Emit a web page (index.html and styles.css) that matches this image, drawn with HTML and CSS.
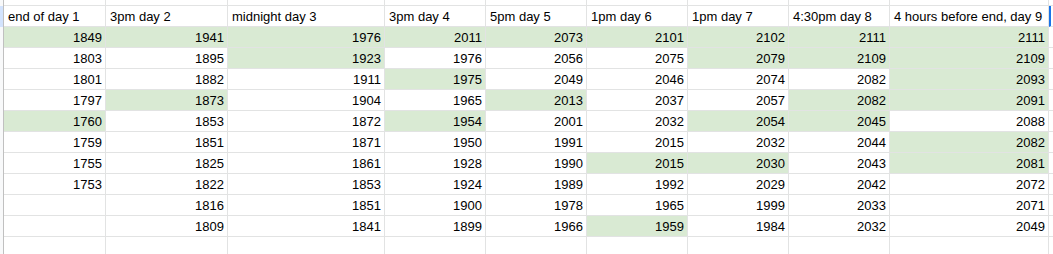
FILE: index.html
```html
<!DOCTYPE html>
<html lang="en">
<head>
  <meta charset="UTF-8">
  <title>Sheet</title>
  <link rel="stylesheet" href="styles.css">
</head>
<body>
  <div class="sheet">
    <div class="row top">
      <div class="rh"></div><div class="c"></div><div class="c"></div><div class="c"></div><div class="c"></div><div class="c"></div><div class="c"></div><div class="c"></div><div class="c"></div><div class="c"></div><div class="tail"></div>
    </div>
    <div class="row head">
      <div class="rh"></div>
      <div class="c">end of day 1</div>
      <div class="c">3pm day 2</div>
      <div class="c">midnight day 3</div>
      <div class="c">3pm day 4</div>
      <div class="c">5pm day 5</div>
      <div class="c">1pm day 6</div>
      <div class="c">1pm day 7</div>
      <div class="c">4:30pm day 8</div>
      <div class="c">4 hours before end, day 9</div>
      <div class="tail"></div>
    </div>
    <div class="row">
      <div class="rh"></div>
      <div class="c n g">1849</div><div class="c n g">1941</div><div class="c n g">1976</div><div class="c n g">2011</div><div class="c n g">2073</div><div class="c n g">2101</div><div class="c n g">2102</div><div class="c n g">2111</div><div class="c n g">2111</div>
      <div class="tail"></div>
    </div>
    <div class="row">
      <div class="rh"></div>
      <div class="c n">1803</div><div class="c n">1895</div><div class="c n g">1923</div><div class="c n">1976</div><div class="c n">2056</div><div class="c n">2075</div><div class="c n g">2079</div><div class="c n g">2109</div><div class="c n g">2109</div>
      <div class="tail"></div>
    </div>
    <div class="row">
      <div class="rh"></div>
      <div class="c n">1801</div><div class="c n">1882</div><div class="c n">1911</div><div class="c n g">1975</div><div class="c n">2049</div><div class="c n">2046</div><div class="c n">2074</div><div class="c n">2082</div><div class="c n g">2093</div>
      <div class="tail"></div>
    </div>
    <div class="row">
      <div class="rh"></div>
      <div class="c n">1797</div><div class="c n g">1873</div><div class="c n">1904</div><div class="c n">1965</div><div class="c n g">2013</div><div class="c n">2037</div><div class="c n">2057</div><div class="c n g">2082</div><div class="c n g">2091</div>
      <div class="tail"></div>
    </div>
    <div class="row">
      <div class="rh"></div>
      <div class="c n g">1760</div><div class="c n">1853</div><div class="c n">1872</div><div class="c n g">1954</div><div class="c n">2001</div><div class="c n">2032</div><div class="c n g">2054</div><div class="c n g">2045</div><div class="c n">2088</div>
      <div class="tail"></div>
    </div>
    <div class="row">
      <div class="rh"></div>
      <div class="c n">1759</div><div class="c n">1851</div><div class="c n">1871</div><div class="c n">1950</div><div class="c n">1991</div><div class="c n">2015</div><div class="c n">2032</div><div class="c n">2044</div><div class="c n g">2082</div>
      <div class="tail"></div>
    </div>
    <div class="row">
      <div class="rh"></div>
      <div class="c n">1755</div><div class="c n">1825</div><div class="c n">1861</div><div class="c n">1928</div><div class="c n">1990</div><div class="c n g">2015</div><div class="c n g">2030</div><div class="c n">2043</div><div class="c n g">2081</div>
      <div class="tail"></div>
    </div>
    <div class="row">
      <div class="rh"></div>
      <div class="c n">1753</div><div class="c n">1822</div><div class="c n">1853</div><div class="c n">1924</div><div class="c n">1989</div><div class="c n">1992</div><div class="c n">2029</div><div class="c n">2042</div><div class="c n">2072</div>
      <div class="tail"></div>
    </div>
    <div class="row">
      <div class="rh"></div>
      <div class="c n"></div><div class="c n">1816</div><div class="c n">1851</div><div class="c n">1900</div><div class="c n">1978</div><div class="c n">1965</div><div class="c n">1999</div><div class="c n">2033</div><div class="c n">2071</div>
      <div class="tail"></div>
    </div>
    <div class="row">
      <div class="rh"></div>
      <div class="c n"></div><div class="c n">1809</div><div class="c n">1841</div><div class="c n">1899</div><div class="c n">1966</div><div class="c n g">1959</div><div class="c n">1984</div><div class="c n">2032</div><div class="c n">2049</div>
      <div class="tail"></div>
    </div>
    <div class="row last">
      <div class="rh"></div><div class="c"></div><div class="c"></div><div class="c"></div><div class="c"></div><div class="c"></div><div class="c"></div><div class="c"></div><div class="c"></div><div class="c"></div><div class="tail"></div>
    </div>
  </div>
</body>
</html>
```

FILE: styles.css
```css
html, body {
  margin: 0;
  padding: 0;
  background: #ffffff;
}

body {
  font-family: "Liberation Sans", Arial, sans-serif;
  font-size: 13px;
  color: #000000;
  overflow: hidden;
}

.sheet {
  width: 1053px;
  height: 254px;
  overflow: hidden;
}

.row {
  display: grid;
  grid-template-columns: 4px 102px 122px 157px repeat(5, 101px) 159px 1fr;
  height: 21px;
}

.row.top {
  height: 6px;
}

.row.last {
  height: 30px;
}

.rh {
  box-sizing: border-box;
  background: #f8f9fa;
  border-right: 1px solid #c0c0c0;
}

.row.head .rh {
  background: #d3e3fd;
}

.c {
  box-sizing: border-box;
  display: flex;
  align-items: flex-end;
  border-right: 1px solid #e2e3e3;
  border-bottom: 1px solid #e2e3e3;
  padding: 0 3px 2px 4px;
  line-height: 15px;
  white-space: nowrap;
  overflow: hidden;
}

.c.n {
  justify-content: flex-end;
}

.c.g {
  background: #d9ead3;
}

.tail {
  box-sizing: border-box;
  border-bottom: 1px solid #e2e3e3;
}

.row.head .tail {
  border-left: 2px solid #1a73e8;
}

.row.last .c,
.row.last .tail {
  border-bottom: none;
}
```
